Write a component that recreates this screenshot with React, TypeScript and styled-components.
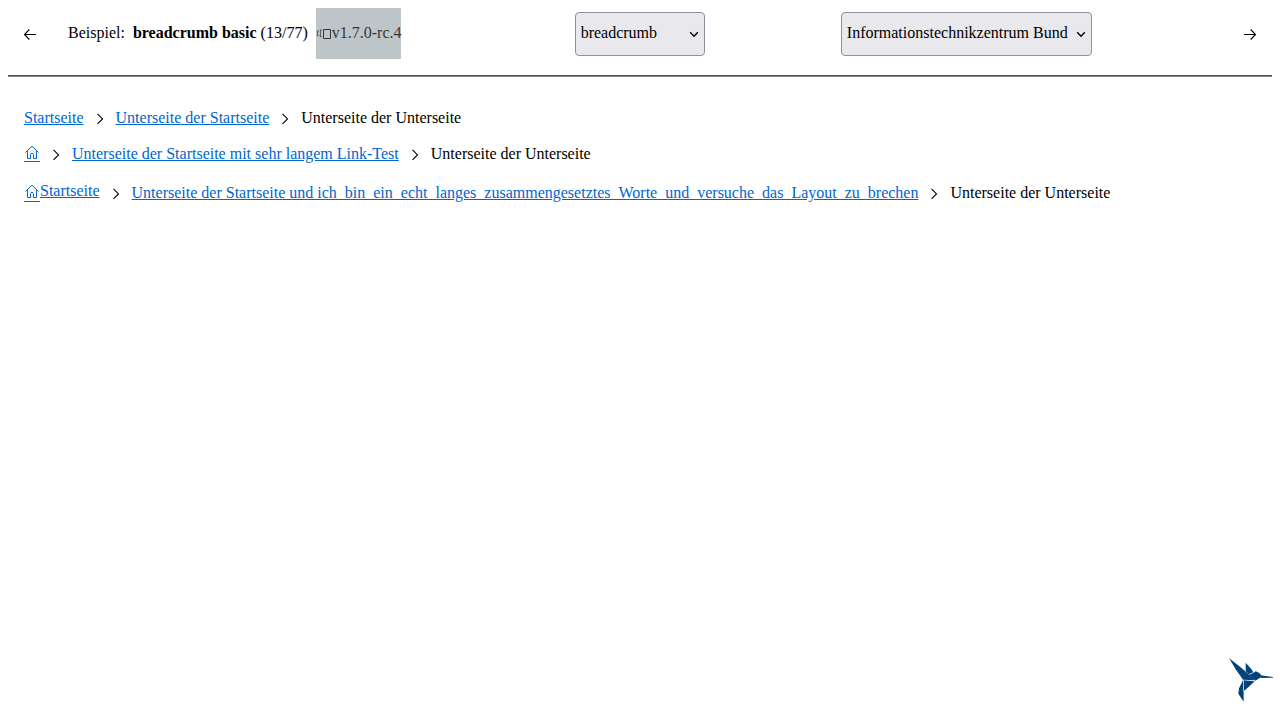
import React from "react";
import styled, { createGlobalStyle } from "styled-components";

const GlobalStyle = createGlobalStyle`
  body {
    margin: 8px;
    background: #fff;
    color: #000;
    font: 16px/18px "Liberation Serif", "Times New Roman", serif;
  }
`;

const Header = styled.header`
  display: flex;
  align-items: flex-start;
  justify-content: space-between;
  padding-bottom: 16px;
`;

const Divider = styled.hr`
  height: 0;
  margin: 0;
  border: 0;
  border-top: 1px solid #504e50;
  border-bottom: 1px solid #858385;
`;

const Intro = styled.div`
  display: flex;
  gap: 16px;
  padding-right: 37px;
`;

const IconButton = styled.button`
  display: grid;
  place-items: center;
  width: 44px;
  height: 44px;
  margin: 4px 0 0;
  padding: 0;
  border: 0;
  background: transparent;
  color: #000;
  cursor: pointer;
`;

const Caption = styled.div`
  display: flex;
  gap: 8px;
  line-height: 49px;
  white-space: nowrap;
`;

const Badge = styled.span`
  display: flex;
  align-items: center;
  padding-bottom: 2px;
  background: #bec5c9;
  color: #34373a;
`;

const SelectBox = styled.div<{ $width: number }>`
  display: grid;
  align-items: center;
  width: ${(p) => p.$width}px;
  margin-top: 4px;

  > * {
    grid-area: 1 / 1;
  }

  > svg {
    justify-self: end;
    margin-right: 5px;
    pointer-events: none;
  }
`;

const Select = styled.select`
  appearance: none;
  box-sizing: border-box;
  width: 100%;
  height: 44px;
  margin: 0;
  padding: 0 5px 2px;
  border: 1px solid #8f8f9d;
  border-radius: 4px;
  background-color: #e9e9ed;
  color: #000;
  font: inherit;
`;

const Main = styled.main`
  display: flex;
  flex-direction: column;
  gap: 18px;
  padding: 32px 16px;
`;

const Crumbs = styled.ol<{ $tall?: boolean }>`
  display: flex;
  flex-wrap: wrap;
  min-height: ${(p) => (p.$tall ? 24 : 18)}px;
  margin: 0;
  padding: 0;
  list-style: none;
`;

const Crumb = styled.li`
  display: flex;
  align-items: center;
`;

const Separator = styled.svg`
  width: 16px;
  height: 16px;
  margin: 2px 8px 0;
`;

const Link = styled.a`
  color: #0066d0;
  text-decoration: underline;
`;

const IconLink = styled(Link)<{ $low?: boolean }>`
  display: flex;
  align-items: flex-start;
  align-self: ${(p) => (p.$low ? "center" : "flex-start")};
  padding-bottom: ${(p) => (p.$low ? 2 : 0)}px;
  text-decoration: none;
`;

const HomeFrame = styled.span<{ $low?: boolean }>`
  display: flex;
  width: 16px;
  height: ${(p) => (p.$low ? 17 : 16)}px;
  margin-top: ${(p) => (p.$low ? 2 : 0)}px;
  border-bottom: 1px solid #0066d0;
`;

const LinkText = styled.span`
  text-decoration: underline;
`;

const Logo = styled.svg`
  position: fixed;
  right: 7px;
  bottom: 18px;
  width: 44px;
  height: 44px;
`;

const Chevron = () => (
  <Separator viewBox="0 0 16 16" fill="none" stroke="#000" strokeWidth="1.1" aria-hidden="true">
    <path d="M5.5 2.9 10.5 7.9 5.5 12.9" />
  </Separator>
);

const Arrow = ({ back }: { back?: boolean }) => (
  <svg width="16" height="16" viewBox="0 0 16 16" fill="none" stroke="currentColor" strokeWidth="1.1" aria-hidden="true">
    <path d={back ? "M14 8.5H2.5M7.3 3.5 2.5 8.5 7.3 13.5" : "M2 8.5H13.5M8.7 3.5 13.5 8.5 8.7 13.5"} />
  </svg>
);

const Boxes = () => (
  <svg width="16" height="18" viewBox="0 0 16 18" fill="none" stroke="currentColor" aria-hidden="true">
    <path strokeWidth=".8" d="M2.8 6.9H1.4V11.7H2.8M5.8 5.9H4.4V12.7H5.8" />
    <path d="M7.5 5.5H14.5V14.5H7.5Z" />
  </svg>
);

const Home = ({ low }: { low?: boolean }) => (
  <HomeFrame $low={low}>
    <svg width="16" height="16" viewBox="0 0 16 16" fill="none" stroke="currentColor" strokeWidth="1" strokeLinejoin="round" strokeLinecap="round" aria-hidden="true">
      <path d="M1.8 7.2 8 1.2 14.2 7.2M3.5 6.5V13.5H6.5V9.5Q6.5 8.5 8 8.5T9.5 9.5V13.5H12.5V6.5" />
    </svg>
  </HomeFrame>
);

const Dropdown = ({ width, label, value }: { width: number; label: string; value: string }) => (
  <SelectBox $width={width}>
    <Select aria-label={label}>
      <option>{value}</option>
    </Select>
    <svg width="12" height="12" viewBox="0 0 12 12" fill="none" stroke="#000" strokeWidth="1.4" aria-hidden="true">
      <path d="M2.2 4.2 6 8.2 9.8 4.2" />
    </svg>
  </SelectBox>
);

export default function App() {
  return (
    <>
      <GlobalStyle />
      <Header>
        <Intro>
          <IconButton type="button" aria-label="Zurück">
            <Arrow back />
          </IconButton>
          <Caption>
            <span>Beispiel:</span>
            <span>
              <b>breadcrumb basic</b> (13/77)
            </span>
            <Badge>
              <Boxes />
              v1.7.0-rc.4
            </Badge>
          </Caption>
        </Intro>
        <Dropdown width={130} label="Komponente" value="breadcrumb" />
        <Dropdown width={251} label="Theme" value="Informationstechnikzentrum Bund" />
        <IconButton type="button" aria-label="Weiter">
          <Arrow />
        </IconButton>
      </Header>
      <Divider />
      <Main>
        <Crumbs>
          <Crumb>
            <Link href="#/">Startseite</Link>
          </Crumb>
          <Crumb>
            <Chevron />
            <Link href="#/unterseite">Unterseite der Startseite</Link>
          </Crumb>
          <Crumb>
            <Chevron />
            Unterseite der Unterseite
          </Crumb>
        </Crumbs>
        <Crumbs>
          <Crumb>
            <IconLink href="#/" aria-label="Startseite">
              <Home />
            </IconLink>
          </Crumb>
          <Crumb>
            <Chevron />
            <Link href="#/unterseite">Unterseite der Startseite mit sehr langem Link-Test</Link>
          </Crumb>
          <Crumb>
            <Chevron />
            Unterseite der Unterseite
          </Crumb>
        </Crumbs>
        <Crumbs $tall>
          <Crumb>
            <IconLink href="#/" $low>
              <Home low />
              <LinkText>Startseite</LinkText>
            </IconLink>
          </Crumb>
          <Crumb>
            <Chevron />
            <Link href="#/unterseite">
              Unterseite der Startseite und ich_bin_ein_echt_langes_zusammengesetztes_Worte_und_versuche_das_Layout_zu_brechen
            </Link>
          </Crumb>
          <Crumb>
            <Chevron />
            Unterseite der Unterseite
          </Crumb>
        </Crumbs>
      </Main>
      <Logo viewBox="42 39 132 132" fill="#04437a" role="img" aria-label="Kolibri">
        <path d="M42 39 75 65 97 84 119 106 84 104 62 73Z" />
        <path d="M92 53 109 72 115 82 101 88 92 78Z" />
        <path d="M101 90 113 85 122 79 132 83 139 91 136 98 121 107Z" />
        <path d="M136 91 175 96 175 98 137 99Z" />
        <path d="M86 106 119 109 104 123 86 139Z" />
        <path d="M84 106 84 137 86 140 86 170 70 146 72 130Z" />
      </Logo>
    </>
  );
}
